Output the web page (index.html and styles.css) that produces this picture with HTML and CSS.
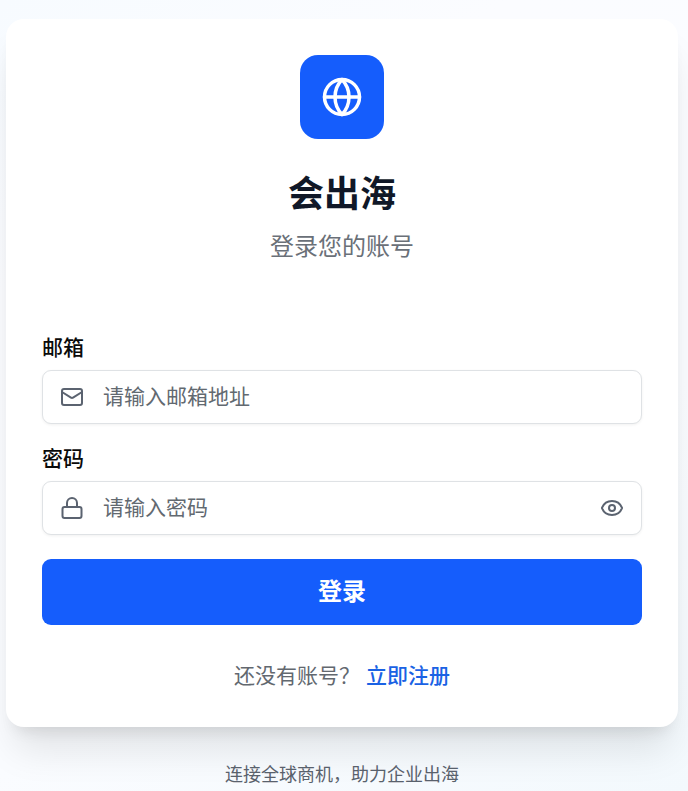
FILE: index.html
```html
<!DOCTYPE html>
<html lang="zh-CN">
<head>
<meta charset="utf-8">
<title>会出海</title>
<link rel="stylesheet" href="styles.css">
</head>
<body>
<main class="page">
  <section class="card">
    <header class="head">
      <div class="logo"><svg class="icon globe" viewBox="0 0 24 24"><circle cx="12" cy="12" r="10"/><path d="M12 2a14.5 14.5 0 0 0 0 20 14.5 14.5 0 0 0 0-20"/><path d="M2 12h20"/></svg></div>
      <h1 class="title">会出海</h1>
      <p class="subtitle">登录您的账号</p>
    </header>
    <form class="form">
      <label class="label" for="email">邮箱</label>
      <div class="field">
        <svg class="icon" viewBox="0 0 24 24"><rect x="2" y="4" width="20" height="16" rx="2"/><path d="m22 7-8.97 5.7a1.94 1.94 0 0 1-2.06 0L2 7"/></svg>
        <input class="input" id="email" type="email" placeholder="请输入邮箱地址">
      </div>
      <label class="label" for="password">密码</label>
      <div class="field">
        <svg class="icon" viewBox="0 0 24 24"><rect x="2.5" y="11" width="19" height="11" rx="2"/><path d="M7 11V7a5 5 0 0 1 10 0v4"/></svg>
        <input class="input" id="password" type="password" placeholder="请输入密码">
        <svg class="icon" viewBox="0 0 24 24"><path d="M2.062 12.348a1 1 0 0 1 0-.696 10.75 10.75 0 0 1 19.876 0 1 1 0 0 1 0 .696 10.75 10.75 0 0 1-19.876 0"/><circle cx="12" cy="12" r="3"/></svg>
      </div>
      <button class="submit" type="button">登录</button>
    </form>
    <p class="signup"><span>还没有账号？</span><a class="link">立即注册</a></p>
  </section>
  <footer class="footer">连接全球商机，助力企业出海</footer>
</main>
</body>
</html>
```
FILE: styles.css
```css
* { box-sizing: border-box; }
body {
  margin: 0;
  font-family: "Noto Sans CJK SC", sans-serif;
  color: #101828;
}
.page {
  height: 791px;
  padding: 19px 10px 0 6px;
  overflow: hidden;
  background: linear-gradient(150deg, #f7fbff, #fbfcff 25%, #fafcff 65%, #f3f9fd);
}
.card {
  height: 708px;
  padding: 36px 36px 0;
  border-radius: 18px;
  background: #fff;
  box-shadow: 0 30px 38px -8px rgba(0, 0, 0, .1), 0 12px 15px -9px rgba(0, 0, 0, .1);
}
.head { display: flex; flex-direction: column; align-items: center; }
.logo {
  display: flex;
  align-items: center;
  justify-content: center;
  width: 84px;
  height: 84px;
  border-radius: 18px;
  background: #155dfc;
  color: #fff;
}
.icon {
  flex: none;
  width: 24px;
  height: 24px;
  fill: none;
  stroke: currentColor;
  stroke-width: 2;
  stroke-linecap: round;
  stroke-linejoin: round;
}
.globe { width: 42px; height: 42px; }
.title { margin: 30px 0 0; font-size: 36px; line-height: 44px; font-weight: 700; }
.subtitle { margin: 14px 0 0; font-size: 24px; line-height: 36px; color: #6a7078; }
.form { margin-top: 71px; }
.label { display: block; height: 36px; font-size: 21px; line-height: 24px; font-weight: 500; color: #0a0a0a; }
.field {
  display: flex;
  align-items: center;
  height: 54px;
  margin-bottom: 21px;
  padding: 0 17px;
  border: 1px solid #dfe2e5;
  border-radius: 9px;
  background: #fff;
  box-shadow: 0 1px 3px rgba(0, 0, 0, .06);
  color: #5b6370;
}
.input {
  flex: 1;
  min-width: 0;
  margin-left: 19px;
  padding: 0 0 4px;
  border: 0;
  outline: 0;
  background: transparent;
  font: 21px/30px "Noto Sans CJK SC", sans-serif;
}
.input::placeholder { color: #626970; opacity: 1; }
.submit {
  display: block;
  width: 100%;
  height: 66px;
  margin-top: 24px;
  padding: 0 0 4px;
  border: 0;
  border-radius: 9px;
  background: #155dfc;
  color: #fff;
  font: 700 24px/36px "Noto Sans CJK SC", sans-serif;
}
.signup { display: flex; justify-content: center; gap: 6px; margin: 34px 0 0; font-size: 21px; line-height: 30px; color: #62686f; }
.link { color: #1a62e4; font-weight: 500; }
.footer { margin-top: 33px; text-align: center; font-size: 18px; line-height: 26px; color: #59616c; }
```
